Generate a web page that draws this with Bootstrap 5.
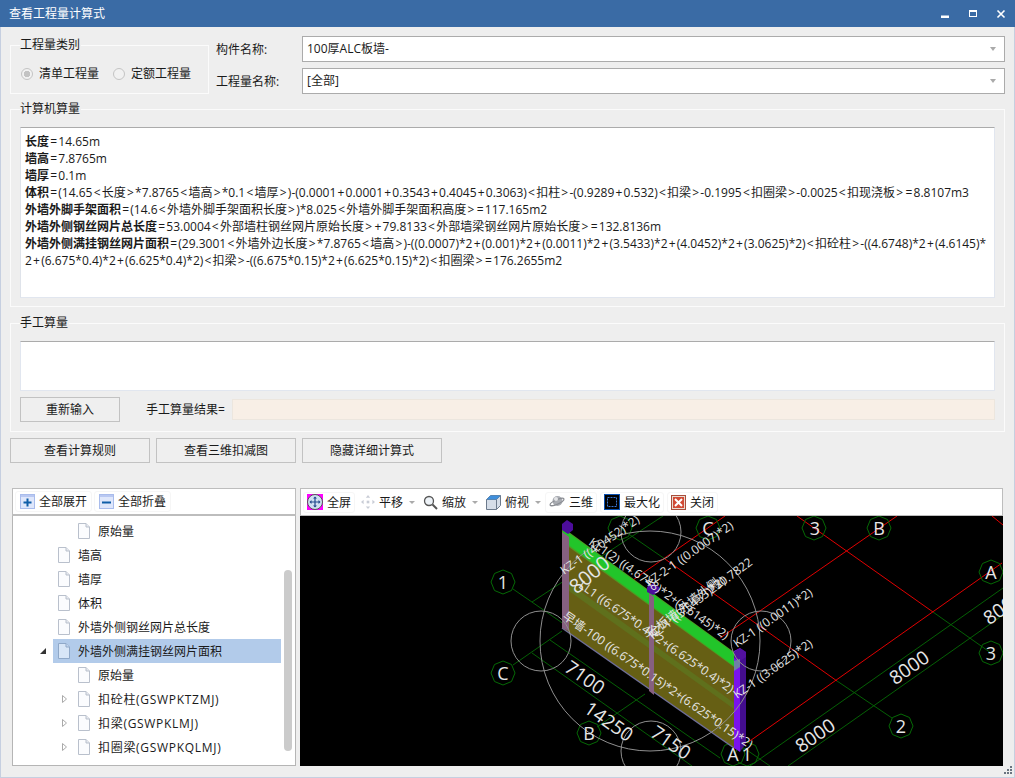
<!DOCTYPE html>
<html lang="zh"><head><meta charset="utf-8"><title>查看工程量计算式</title>
<link href="https://cdn.jsdelivr.net/npm/bootstrap@5.3.0/dist/css/bootstrap.min.css" rel="stylesheet">
<style>
html,body{height:778px;overflow:hidden;margin:0}
body{background:#eee;font-family:"Open Sans","Noto Sans CJK SC",sans-serif;font-size:12px;color:#1a1a1a;line-height:17px}
.win{height:778px;border:solid #c6cfe0;border-width:0 1px 1px 1px}
.titlebar{height:27px;background:#3a6ba5;color:#fff;padding:0 0 0 9px;font-size:12px;margin:0 -1px}
.winbtn{width:28px;text-align:center;line-height:0}
.wrap{padding:9px 9px 0 9px}
.grp{border:1px solid #fbfbfb;margin:0;padding:0 9px;min-width:0}
.grp legend{float:none;width:auto;font-size:12px;line-height:14px;margin:0;padding:0 1px 0 0}
.type-grp{width:199px;height:56px;margin-top:2px;flex:none}
.radio-row{margin-top:13px;white-space:nowrap}
.radio-dot{width:12px;height:12px;border:1px solid #c4c4c4;border-radius:50%;background:#f1f1f1;display:inline-block;flex:none;margin-left:1px}
.radio-on{background:radial-gradient(circle,#c3c3c3 0 3px,#f1f1f1 3.500px)}
.radio-lab{margin-left:6px}
.radio-next{margin-left:14px}
.fld-lab{width:93px;flex:none;padding-left:7px}
.combo{height:26px;border:1px solid #ababab;background:#fff;padding:0 4px;line-height:24px}
.combo-arrow{width:0;height:0;border:solid transparent;border-width:4px 3px 0;border-top-color:#aaa}
.formula{height:171px;margin:11px 0 0 0;background:#fff;border:1px solid #e1e6ef;border-top-color:#ababab;border-left-color:#dfe3ea;padding:5px 4px;line-height:17px;white-space:nowrap;overflow:hidden}
.op{font-style:normal;display:inline-block;width:9.300px;text-align:center}
.manual{height:50px;margin-top:11px;background:#fff;border:1px solid #e1e6ef;border-top-color:#ababab}
.gbtn{--bs-btn-border-radius:0;--bs-btn-padding-y:0;--bs-btn-padding-x:0;--bs-btn-font-size:12px;--bs-btn-bg:#efefef;--bs-btn-border-color:#c2c2c2;--bs-btn-color:#1a1a1a;--bs-btn-line-height:1;height:25px}
.w100{width:100px}.w140{width:140px}
.res-lab{margin-left:26px;width:86px;flex:none}
.resbox{height:21px;background:#f8efe6;border:1px solid #ece6de;flex:1}
.panel-tool{height:28px;background:#fff;border:1px solid #bdbdbd;padding:0 2px}
.tree-tool{width:284px;border-bottom-width:2px}
.lower{margin:25px 0 0 2px;height:278px;gap:4px}
.tree{width:284px;height:250px;border:1px solid #b5b5b5;border-top:0;background:#fff;overflow:hidden;position:relative;flex:none;padding-top:3px}
.tree-row{height:24px;display:flex;align-items:center}
.lv1{padding-left:45px}.lv2{padding-left:65px}.lv2a{padding-left:49px}.lvsel{padding-left:27px}
.tree-sel{background:#b2cbea;width:228px;padding-left:5px;height:100%;display:flex;align-items:center}
.dic{margin-right:8px;flex:none}
.tri-open{margin-right:7px;flex:none}.tri-closed{margin-right:11px;flex:none}
.latw{letter-spacing:.7px}
.tree-scroll{position:absolute;right:3px;top:54px;width:8px;height:181px;background:#cbcbcb;border-radius:4px}
.tbtn{padding:0 3px;height:21px;border:1px solid #f6f6f6;border-radius:3px;margin-right:2px;display:flex;align-items:center;gap:4px;white-space:nowrap}
.left-tbtn{padding:0 4px;margin-right:2px}
.tbtn-plain{border-color:transparent;padding-right:2px;margin-right:1px}
.tbtn-wide{margin-right:3px}
.scene{height:250px;background:#000;display:block;width:703px}
.rightpanel{width:703px;flex:none}
.cad text{font-family:"Open Sans","Noto Sans CJK SC",sans-serif;fill:#e6e6e6}
.grip{position:absolute;right:1px;bottom:2px}
.caret-dn{width:0;height:0;border:solid transparent;border-width:3px 3px 0;border-top-color:#aaa;margin-left:2px}
.mid-gap{margin-top:6px;gap:6px}
.res-row{margin-top:6px}
</style></head><body>
<svg width="0" height="0" class="position-absolute"><defs>
<symbol id="doc" viewBox="0 0 12 16"><path d="M.5.5h7.500l3.500 3.500v11.500h-11z" fill="#fbfcfe" stroke="#b9c0cc"/><path d="M8 .5v3.500h3.500" fill="#e6eaf0" stroke="#b9c0cc"/></symbol>
<symbol id="docsel" viewBox="0 0 12 16"><path d="M.5.5h7.500l3.500 3.500v11.500h-11z" fill="#d8e6f7" stroke="#8fa8c8"/><path d="M8 .5v3.500h3.500" fill="#c4d6ee" stroke="#8fa8c8"/></symbol>
</defs></svg>
<div class="win d-flex flex-column position-relative">
<div class="titlebar d-flex align-items-center justify-content-between">
<span>查看工程量计算式</span>
<div class="d-flex">
<span class="winbtn"><svg width="10" height="10" viewBox="0 0 10 10"><rect x="1" y="6.500" width="8" height="2.500" fill="#fff"/></svg></span>
<span class="winbtn"><svg width="10" height="10" viewBox="0 0 10 10"><rect x="1.500" y="1.500" width="7" height="6" fill="none" stroke="#fff"/><rect x="1" y="1" width="8" height="2" fill="#fff"/></svg></span>
<span class="winbtn"><svg width="10" height="10" viewBox="0 0 10 10"><path d="M1.500 1.500l7 7M8.500 1.500l-7 7" stroke="#fff" stroke-width="1.600"/></svg></span>
</div></div>
<div class="wrap">
<div class="d-flex">
<fieldset class="grp type-grp"><legend>工程量类别</legend>
<div class="d-flex align-items-center radio-row">
<span class="radio-dot radio-on"></span><span class="radio-lab">清单工程量</span>
<span class="radio-dot radio-next"></span><span class="radio-lab">定额工程量</span>
</div></fieldset>
<div class="flex-grow-1 d-flex flex-column" style="gap:6px">
<div class="d-flex align-items-center"><span class="fld-lab">构件名称:</span><div class="combo flex-grow-1 d-flex align-items-center justify-content-between"><span>100厚ALC板墙-</span><span class="combo-arrow me-1"></span></div></div>
<div class="d-flex align-items-center"><span class="fld-lab">工程量名称:</span><div class="combo flex-grow-1 d-flex align-items-center justify-content-between"><span>[全部]</span><span class="combo-arrow me-1"></span></div></div>
</div></div>
<fieldset class="grp" style="height:205px;margin-top:8px"><legend>计算机算量</legend>
<div class="formula"><strong>长度</strong><i class="op">=</i>14.65m<br><strong>墙高</strong><i class="op">=</i>7.8765m<br><strong>墙厚</strong><i class="op">=</i>0.1m<br><strong>体积</strong><i class="op">=</i>(14.65<i class="op">&lt;</i>长度<i class="op">&gt;</i>*7.8765<i class="op">&lt;</i>墙高<i class="op">&gt;</i>*0.1<i class="op">&lt;</i>墙厚<i class="op">&gt;</i>)-(0.0001<i class="op">+</i>0.0001<i class="op">+</i>0.3543<i class="op">+</i>0.4045<i class="op">+</i>0.3063)<i class="op">&lt;</i>扣柱<i class="op">&gt;</i>-(0.9289<i class="op">+</i>0.532)<i class="op">&lt;</i>扣梁<i class="op">&gt;</i>-0.1995<i class="op">&lt;</i>扣圈梁<i class="op">&gt;</i>-0.0025<i class="op">&lt;</i>扣现浇板<i class="op">&gt;</i><i class="op">=</i>8.8107m3<br><strong>外墙外脚手架面积</strong><i class="op">=</i>(14.6<i class="op">&lt;</i>外墙外脚手架面积长度<i class="op">&gt;</i>)*8.025<i class="op">&lt;</i>外墙外脚手架面积高度<i class="op">&gt;</i><i class="op">=</i>117.165m2<br><strong>外墙外侧钢丝网片总长度</strong><i class="op">=</i>53.0004<i class="op">&lt;</i>外部墙柱钢丝网片原始长度<i class="op">&gt;</i><i class="op">+</i>79.8133<i class="op">&lt;</i>外部墙梁钢丝网片原始长度<i class="op">&gt;</i><i class="op">=</i>132.8136m<br><strong>外墙外侧满挂钢丝网片面积</strong><i class="op">=</i>(29.3001<i class="op">&lt;</i>外墙外边长度<i class="op">&gt;</i>*7.8765<i class="op">&lt;</i>墙高<i class="op">&gt;</i>)-((0.0007)*2<i class="op">+</i>(0.001)*2<i class="op">+</i>(0.0011)*2<i class="op">+</i>(3.5433)*2<i class="op">+</i>(4.0452)*2<i class="op">+</i>(3.0625)*2)<i class="op">&lt;</i>扣砼柱<i class="op">&gt;</i>-((4.6748)*2<i class="op">+</i>(4.6145)*<br>2<i class="op">+</i>(6.675*0.4)*2<i class="op">+</i>(6.625*0.4)*2)<i class="op">&lt;</i>扣梁<i class="op">&gt;</i>-((6.675*0.15)*2<i class="op">+</i>(6.625*0.15)*2)<i class="op">&lt;</i>扣圈梁<i class="op">&gt;</i><i class="op">=</i>176.2655m2</div>
</fieldset>
<fieldset class="grp" style="height:116px;margin-top:9px"><legend>手工算量</legend>
<div class="manual"></div>
<div class="d-flex align-items-center res-row">
<button class="btn gbtn w100" type="button">重新输入</button>
<span class="res-lab">手工算量结果=</span>
<div class="resbox"></div></div>
</fieldset>
<div class="d-flex mid-gap">
<button class="btn gbtn w140" type="button">查看计算规则</button>
<button class="btn gbtn w140" type="button">查看三维扣减图</button>
<button class="btn gbtn w140" type="button">隐藏详细计算式</button>
</div>
<div class="d-flex lower">
<div class="d-flex flex-column flex-none">
<div class="panel-tool tree-tool d-flex align-items-center">
<span class="tbtn left-tbtn"><svg width="15" height="15" viewBox="0 0 15 15"><rect x=".5" y=".5" width="14" height="14" fill="#dfe7fb" stroke="#a9bcec"/><rect x="1" y="1" width="13" height="2" fill="#b9c8f2"/><path d="M3.500 8.500h8M7.500 4.500v8" stroke="#0f5ea8" stroke-width="2"/></svg>全部展开</span>
<span class="tbtn left-tbtn"><svg width="15" height="15" viewBox="0 0 15 15"><rect x=".5" y=".5" width="14" height="14" fill="#dfe7fb" stroke="#a9bcec"/><rect x="1" y="1" width="13" height="2" fill="#b9c8f2"/><path d="M3 8.500h9" stroke="#0f5ea8" stroke-width="2"/></svg>全部折叠</span>
</div>
<div class="tree">
<div class="tree-row lv2"><svg class="dic" width="12" height="16"><use href="#doc"/></svg>原始量</div>
<div class="tree-row lv1"><svg class="dic" width="12" height="16"><use href="#doc"/></svg>墙高</div>
<div class="tree-row lv1"><svg class="dic" width="12" height="16"><use href="#doc"/></svg>墙厚</div>
<div class="tree-row lv1"><svg class="dic" width="12" height="16"><use href="#doc"/></svg>体积</div>
<div class="tree-row lv1"><svg class="dic" width="12" height="16"><use href="#doc"/></svg>外墙外侧钢丝网片总长度</div>
<div class="tree-row lvsel"><svg class="tri-open" width="6" height="6" viewBox="0 0 6 6"><path d="M6 0v6H0z" fill="#333"/></svg><div class="tree-sel"><svg class="dic" width="12" height="16"><use href="#docsel"/></svg>外墙外侧满挂钢丝网片面积</div></div>
<div class="tree-row lv2"><svg class="dic" width="12" height="16"><use href="#doc"/></svg>原始量</div>
<div class="tree-row lv2a"><svg class="tri-closed" width="5" height="8" viewBox="0 0 5 8"><path d="M.5.5v7l4-3.500z" fill="#fff" stroke="#aaa"/></svg><svg class="dic" width="12" height="16"><use href="#doc"/></svg><span class="latw">扣砼柱(GSWPKTZMJ)</span></div>
<div class="tree-row lv2a"><svg class="tri-closed" width="5" height="8" viewBox="0 0 5 8"><path d="M.5.5v7l4-3.500z" fill="#fff" stroke="#aaa"/></svg><svg class="dic" width="12" height="16"><use href="#doc"/></svg><span class="latw">扣梁(GSWPKLMJ)</span></div>
<div class="tree-row lv2a"><svg class="tri-closed" width="5" height="8" viewBox="0 0 5 8"><path d="M.5.5v7l4-3.500z" fill="#fff" stroke="#aaa"/></svg><svg class="dic" width="12" height="16"><use href="#doc"/></svg><span class="latw">扣圈梁(GSWPKQLMJ)</span></div>
<div class="tree-scroll"></div>
</div></div>
<div class="rightpanel d-flex flex-column">
<div class="panel-tool d-flex align-items-center">
<span class="tbtn"><svg width="16" height="16" viewBox="0 0 16 16"><rect width="16" height="16" fill="#f0f"/><circle cx="8" cy="8" r="7.500" fill="#cfe0f2" stroke="#555"/><path d="M8 3.500v9M3.500 8h9" stroke="#234a8c" stroke-width="1.200"/><path d="M8 2.500l-2 2h4zM8 13.500l-2-2h4zM2.500 8l2-2v4zM13.500 8l-2-2v4z" fill="#234a8c"/></svg>全屏</span>
<span class="tbtn tbtn-plain"><svg width="14" height="14" viewBox="0 0 16 16" fill="#c9cdd6"><path d="M8 0l-2.500 3h5zM8 16l-2.500-3h5zM0 8l3-2.500v5zM16 8l-3-2.500v5z"/><rect x="6.500" y="6.500" width="3" height="3"/></svg>平移<span class="caret-dn"></span></span>
<span class="tbtn tbtn-plain"><svg width="15" height="15" viewBox="0 0 15 15"><circle cx="6" cy="6" r="4.500" fill="#eef3f8" stroke="#555" stroke-width="1.300"/><path d="M9.500 9.500l4.500 4.500" stroke="#555" stroke-width="2"/></svg>缩放<span class="caret-dn"></span></span>
<span class="tbtn tbtn-plain"><svg width="15" height="15" viewBox="0 0 15 15"><path d="M.5 4.500l4-4h10v10l-4 4H.5z" fill="#d5dde8" stroke="#6c7a8c"/><path d="M.5 4.500h10l4-4" fill="none" stroke="#6c7a8c"/><path d="M4.500.5h10l-4 4H.5z" fill="#3f8fdc"/><path d="M10.500 4.500v10" stroke="#6c7a8c"/></svg>俯视<span class="caret-dn"></span></span>
<span class="tbtn tbtn-wide"><svg width="16" height="14" viewBox="0 0 16 14"><ellipse cx="8.500" cy="6" rx="5" ry="5" fill="#a9acb2"/><ellipse cx="8" cy="7" rx="7.500" ry="2.200" transform="rotate(-25 8 7)" fill="none" stroke="#8a8d93" stroke-width="1.300"/><circle cx="7" cy="4" r="2" fill="#e3e4e7"/></svg>三维</span>
<span class="tbtn tbtn-wide"><svg width="16" height="16" viewBox="0 0 16 16"><rect x=".5" y=".5" width="15" height="15" fill="#000" stroke="#0a4fb0"/><rect x="3.500" y="3.500" width="9" height="9" fill="none" stroke="#3a78d8" stroke-dasharray="2 1"/></svg>最大化</span>
<span class="tbtn"><svg width="15" height="15" viewBox="0 0 15 15"><rect x=".5" y=".5" width="14" height="14" fill="#e9dcd2" stroke="#a84d3b"/><rect x="2" y="2" width="11" height="11" fill="#d24a35"/><path d="M4 4l7 7M11 4l-7 7" stroke="#fff" stroke-width="2"/></svg>关闭</span>
</div>
<svg class="scene cad" viewBox="0 0 703 250">
<defs><clipPath id="cv"><rect width="703" height="250"/></clipPath></defs>
<g clip-path="url(#cv)" fill="none">
<g stroke="#056005">
<path d="M213 73L470 250"/><path d="M213 149L262 115"/><path d="M232 86L363 0"/><path d="M232 137L392 250"/><path d="M250 124L420 242"/>
<path d="M297 211L345 178"/><path d="M633 96L691 137"/><path d="M537 165L592 202"/>
<path d="M703 72L450 250"/><path d="M703 99L488 250"/>
<path d="M320 12L365 43"/>
</g>
<g stroke="#e00000">
<path d="M497 0L633 96"/><path d="M597 0L457 97L420 122"/><path d="M702 47L447 227"/><path d="M365 43L537 165"/>
<path d="M692 0L703 9"/><path d="M333 64L425 0"/>
</g>
<g stroke="#066a06">
<path d="M203 54l8.500 3.500 3.500 8.500-3.500 8.500-8.500 3.500-8.500-3.500-3.500-8.500 3.500-8.500z"/>
<path d="M203 145l8.500 3.500 3.500 8.500-3.500 8.500-8.500 3.500-8.500-3.500-3.500-8.500 3.500-8.500z"/>
<path d="M289 205l8.500 3.500 3.500 8.500-3.500 8.500-8.500 3.500-8.500-3.500-3.500-8.500 3.500-8.500z"/>
<path d="M320 0l8.500 3.500 3.500 8.500-3.500 8.500-8.500 3.500-8.500-3.500-3.500-8.500 3.500-8.500z"/>
<path d="M408 0l8.500 3.500 3.500 8.500-3.500 8.500-8.500 3.500-8.500-3.500-3.500-8.500 3.500-8.500z"/>
<path d="M514 0l8.500 3.500 3.500 8.500-3.500 8.500-8.500 3.500-8.500-3.500-3.500-8.500 3.500-8.500z"/>
<path d="M579 0l8.500 3.500 3.500 8.500-3.500 8.500-8.500 3.500-8.500-3.500-3.500-8.500 3.500-8.500z"/>
<path d="M691 44l8.500 3.500 3.500 8.500-3.500 8.500-8.500 3.500-8.500-3.500-3.500-8.500 3.500-8.500z"/>
<path d="M691 125l8.500 3.500 3.500 8.500-3.500 8.500-8.500 3.500-8.500-3.500-3.500-8.500 3.500-8.500z"/>
<path d="M601 198l8.500 3.500 3.500 8.500-3.500 8.500-8.500 3.500-8.500-3.500-3.500-8.500 3.500-8.500z"/>
<path d="M433 226l8.500 3.500 3.500 8.500-3.500 8.500-8.500 3.500-8.500-3.500-3.500-8.500 3.500-8.500z"/>
<path d="M447 226l8.500 3.500 3.500 8.500-3.500 8.500-8.500 3.500-8.500-3.500-3.500-8.500 3.500-8.500z"/>
</g>
<path d="M262 12L434 137V232L262 112z" fill="#665f14"/>
<path d="M262 62L434 187V193L262 70z" fill="#5f701c"/>
<path d="M262 11L434 136V151L262 26z" fill="#4f9a22"/>
<path d="M263 13L434 137V150L263 25z" fill="#22c52a"/>
<path d="M262 112L434 232" stroke="#6f6f9a" stroke-width="1.500"/>
<path d="M262 16l7 5v94l-7-3z" fill="#866080"/>
<path d="M349 77l5 4v98l-5-4z" fill="#866080"/>
<path d="M262 8l5-4 6 4v6l-5 4-6-4z" fill="#4d0d9c"/>
<path d="M347 71l6-4 6 4v5l-6 3-6-3z" fill="#4d0d9c"/>
<path d="M434 135l6-3v104l-6-4z" fill="#7a12ec"/>
<path d="M440 132l6 4v91l-6 9z" fill="#430d8e"/>
<path d="M434 136l6-4 6 4v5l-6 4-6-3z" fill="#52109f"/>
<path d="M434 145l6-2v8l-6 4z" fill="#6f7fa6"/>
<g stroke="#8f8f8f">
<circle cx="350" cy="125" r="110"/><circle cx="241" cy="125" r="30"/><circle cx="351" cy="16" r="30"/><circle cx="461" cy="125" r="30"/><circle cx="351" cy="235" r="30"/>
</g>
</g>
<g clip-path="url(#cv)" text-anchor="middle">
<g font-size="18">
<text x="203" y="73">1</text><text x="203" y="164">C</text><text x="289" y="224">B</text><text x="408" y="19">C</text><text x="515" y="19">3</text><text x="579" y="19">B</text><text x="691" y="63">A</text><text x="691" y="144">3</text><text x="601" y="217">2</text><text x="433" y="245">A</text><text x="447" y="245">1</text>
</g>
<g font-size="19">
<text transform="translate(281 167) rotate(35)">7100</text>
<text transform="translate(305 211) rotate(35)">14250</text>
<text transform="translate(367 232) rotate(35)">7150</text>
<text transform="translate(613 157) rotate(-35)">8000</text>
<text transform="translate(519 225) rotate(-35)">8000</text>
<text transform="translate(707 97) rotate(-35)">8000</text>
<text transform="translate(294 64) rotate(-40)" font-size="20">8000</text>
</g>
<g font-size="12" text-anchor="start">
<text transform="translate(264 59) rotate(-35)">KZ-1 ((4.0452)*2)</text>
<text transform="translate(349 71) rotate(-35)">KZ-2-1 ((0.0007)*2)</text>
<text transform="translate(437 132) rotate(-35)">KZ-1 ((0.0011)*2)</text>
<text transform="translate(437 183) rotate(-35)">KZ-1 ((3.0625)*2)</text>
<text transform="translate(412 78) rotate(-36)">230.7822</text>
<text transform="translate(351 122) rotate(-38)">砼板墙(外墙外侧</text>
<text transform="translate(353 124) rotate(-38)">KZ-1 ((3.5433)*2)</text>
<text transform="translate(288 28) rotate(35)">KL1(2) ((4.6748)*2+(4.6145)*2)</text>
<text transform="translate(278 71) rotate(35)">LL1 ((6.675*0.4)*2+(6.625*0.4)*2)</text>
<text transform="translate(262 102) rotate(35)">早墙-100 ((6.675*0.15)*2+(6.625*0.15)*2)</text>
</g>
</g>
</svg>
</div></div></div>
<svg class="grip" width="9" height="9" viewBox="0 0 9 9" fill="#6a7480"><rect x="6" y="0" width="2" height="2"/><rect x="3" y="3" width="2" height="2"/><rect x="6" y="3" width="2" height="2"/><rect x="0" y="6" width="2" height="2"/><rect x="3" y="6" width="2" height="2"/><rect x="6" y="6" width="2" height="2"/></svg>
</div>
<script src="https://cdn.jsdelivr.net/npm/bootstrap@5.3.0/dist/js/bootstrap.bundle.min.js"></script>
</body></html>
